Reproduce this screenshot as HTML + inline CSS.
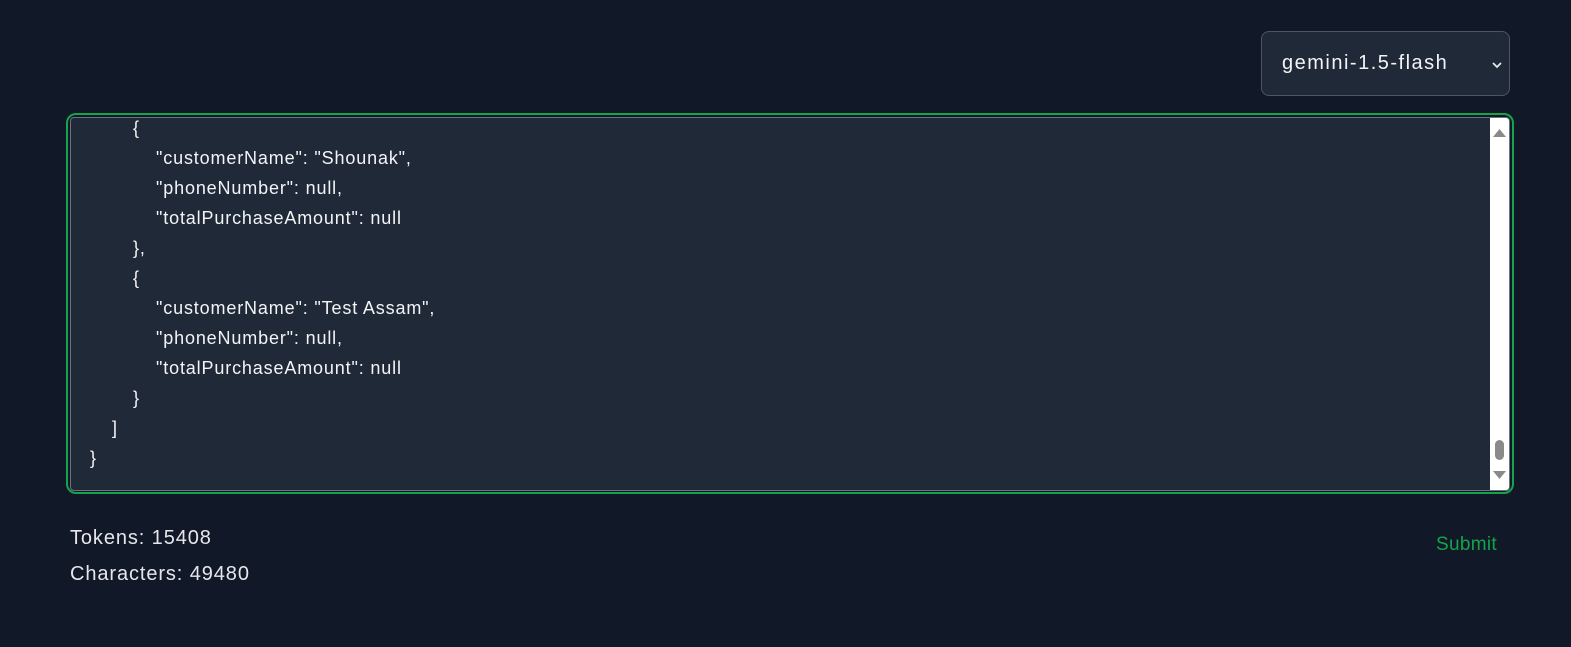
<!DOCTYPE html>
<html><head><style>
body{margin:0;background:#111827;width:1571px;height:647px;overflow:hidden;font-family:"Liberation Sans",sans-serif;position:relative}
.sel{position:absolute;left:1261px;top:31px;width:249px;height:65px;border:1px solid #4b5563;border-radius:8px;background:#1f2937;box-sizing:border-box}
.sel span{position:absolute;left:20px;top:20px;font-size:20px;color:#f3f4f6;letter-spacing:1.5px}
.sel svg{position:absolute;left:229px;top:28px}
.outer{position:absolute;left:66px;top:113px;width:1448px;height:381px;border:2px solid #16a34a;border-radius:10px;box-sizing:border-box}
.inner{position:absolute;left:70px;top:117px;width:1440px;height:374px;border:1px solid #6b7280;border-radius:4px;background:#1f2937;box-sizing:border-box;overflow:hidden}
.sb{position:absolute;right:0;top:0;width:19px;height:100%;background:#fff}
.line{position:absolute;font-size:18px;color:#f3f4f6;white-space:pre;line-height:20px;letter-spacing:0.85px}
.t{position:absolute;left:70px;font-size:20px;color:#e5e7eb;letter-spacing:0.9px}
</style></head><body>
<div class="sel"><span>gemini-1.5-flash</span><svg width="12" height="10" viewBox="0 0 12 10"><path d="M2 3l4 4 4-4" stroke="#e5e7eb" stroke-width="1.8" fill="none"/></svg></div>
<div class="outer"></div>
<div class="inner">
<div class="line" style="left:62px;top:0px">{</div>
<div class="line" style="left:85px;top:30px">"customerName": "Shounak",</div>
<div class="line" style="left:85px;top:60px">"phoneNumber": null,</div>
<div class="line" style="left:85px;top:90px">"totalPurchaseAmount": null</div>
<div class="line" style="left:62px;top:120px">},</div>
<div class="line" style="left:62px;top:150px">{</div>
<div class="line" style="left:85px;top:180px">"customerName": "Test Assam",</div>
<div class="line" style="left:85px;top:210px">"phoneNumber": null,</div>
<div class="line" style="left:85px;top:240px">"totalPurchaseAmount": null</div>
<div class="line" style="left:62px;top:270px">}</div>
<div class="line" style="left:41px;top:300px">]</div>
<div class="line" style="left:19px;top:330px">}</div>
<div class="sb">
<svg width="19" height="374" style="position:absolute;left:0;top:0"><path d="M3 19L9.5 11 16 19z" fill="#8a8a8a"/><rect x="5" y="322" width="9" height="20" rx="4.5" fill="#8a8a8a"/><path d="M3 353L9.5 361 16 353z" fill="#8a8a8a"/></svg>
</div>
</div>
<div class="t" style="top:527px">Tokens: 15408</div>
<div class="t" style="top:563px">Characters: 49480</div>
<div style="position:absolute;left:1436px;top:534px;font-size:19px;color:#16a34a;letter-spacing:0.3px">Submit</div>
</body></html>
